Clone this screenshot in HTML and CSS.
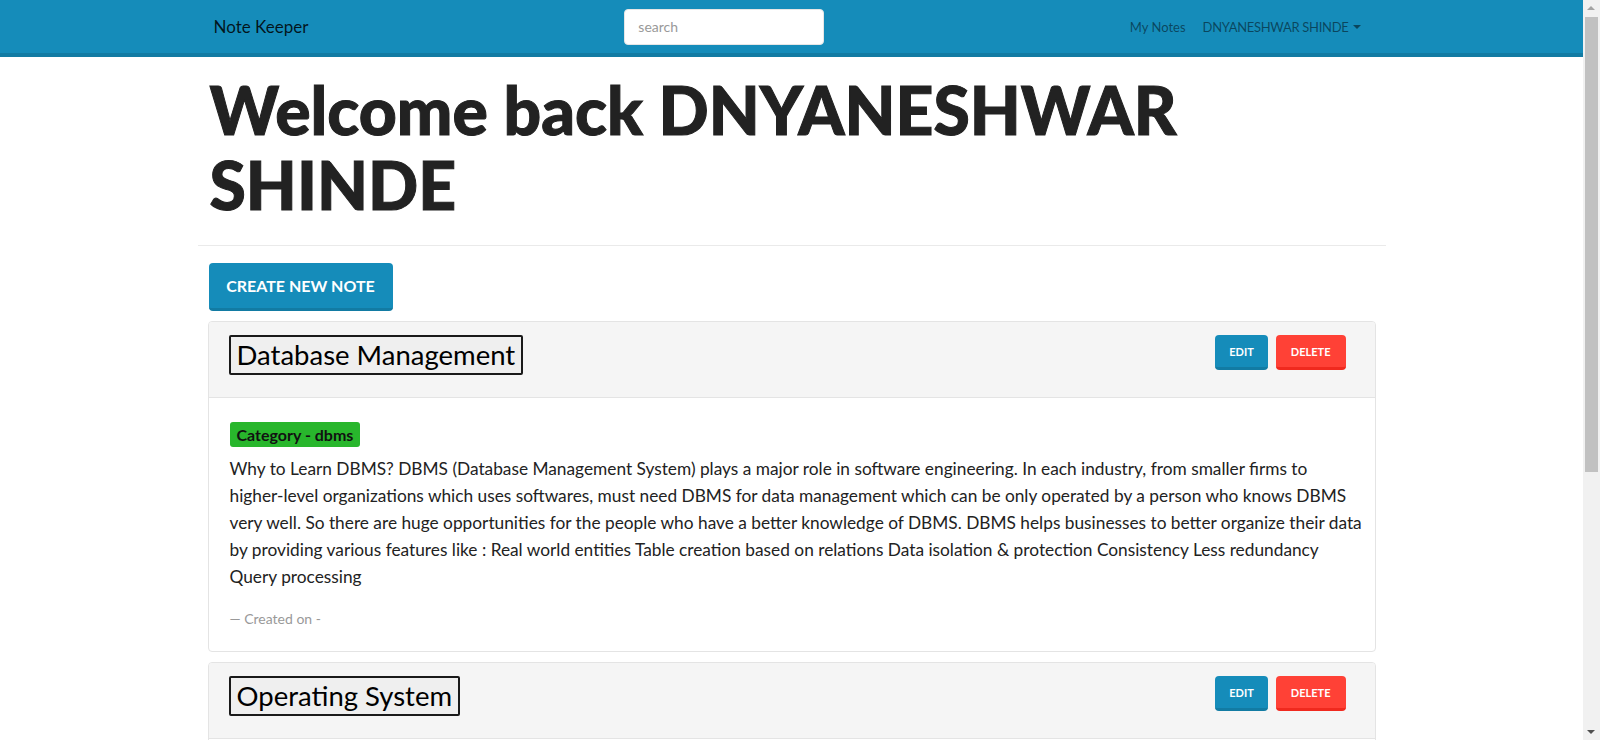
FILE: index.html
```html
<!DOCTYPE html>
<html lang="en">
<head>
<meta charset="utf-8">
<title>Note Keeper</title>
<link rel="stylesheet" href="styles.css">
</head>
<body>
<nav class="navbar">
  <div class="nav-inner">
    <a class="brand" href="#">Note Keeper</a>
    <form class="search-form"><input class="search" type="text" placeholder="search"></form>
    <ul class="nav-links">
      <li><a href="#">My Notes</a></li>
      <li><a href="#" class="dropdown user">DNYANESHWAR SHINDE</a></li>
    </ul>
  </div>
</nav>
<main class="mainback">
  <div class="page">
    <h1 class="heading">Welcome back DNYANESHWAR SHINDE</h1>
    <hr class="rule">
    <a href="#" class="btn btn-lg btn-primary create">Create New Note</a>

    <section class="card">
      <header class="card-header">
        <div class="title-wrap"><span class="note-title">Database Management</span></div>
        <div class="actions">
          <a href="#" class="btn btn-primary">Edit</a>
          <a href="#" class="btn btn-danger">Delete</a>
        </div>
      </header>
      <div class="card-body">
        <div class="badge-row"><span class="badge">Category - dbms</span></div>
        <blockquote class="quote">
          <p><span class="ln">Why to Learn DBMS? DBMS (Database Management System) plays a major role in software engineering. In each industry, from smaller firms to</span> <span class="ln">higher-level organizations which uses softwares, must need DBMS for data management which can be only operated by a person who knows DBMS</span> <span class="ln">very well. So there are huge opportunities for the people who have a better knowledge of DBMS. DBMS helps businesses to better organize their data</span> <span class="ln">by providing various features like : Real world entities Table creation based on relations Data isolation &amp; protection Consistency Less redundancy</span> <span class="ln">Query processing</span></p>
          <footer class="quote-footer">Created on -</footer>
        </blockquote>
      </div>
    </section>

    <section class="card">
      <header class="card-header">
        <div class="title-wrap"><span class="note-title">Operating System</span></div>
        <div class="actions">
          <a href="#" class="btn btn-primary">Edit</a>
          <a href="#" class="btn btn-danger">Delete</a>
        </div>
      </header>
      <div class="card-body">
        <div class="badge-row"><span class="badge">Category - os</span></div>
        <blockquote class="quote">
          <p>An Operating System (OS) is an interface between a computer user and computer hardware. An operating system is a software which performs all the basic tasks like file management, memory management, process management, handling input and output, and controlling peripheral devices such as disk drives and printers. Some popular Operating Systems include Linux Operating System, Windows Operating System, VMS, OS/400, AIX, z/OS, etc. Following are some of important functions of an operating System : Memory Management Processor Management Device Management File Management Security Control over system performance Job accounting Error detecting aids Coordination between other software and users.</p>
          <footer class="quote-footer">Created on -</footer>
        </blockquote>
      </div>
    </section>
  </div>
</main>
<div class="scrollbar" aria-hidden="true">
  <span class="sb-up"></span>
  <span class="sb-thumb"></span>
  <span class="sb-down"></span>
</div>
</body>
</html>
```
FILE: styles.css
```css
* { box-sizing: border-box; }
html, body { margin: 0; padding: 0; }
body {
  font-family: Lato, "Liberation Sans", sans-serif;
  color: #222;
  background: #fff;
  font-size: 14px;
  margin-right: 17px;
}
a { text-decoration: none; }

/* navbar */
.navbar {
  background: #158cba;
  border-bottom: 4px solid #127ba3;
  height: 57px;
}
.nav-inner {
  width: 1188px;
  margin: 0 auto;
  height: 100%;
  padding: 0 25px 0 16px;
  display: flex;
  align-items: center;
}
.brand {
  color: rgba(0, 0, 0, 0.85);
  font-size: 17px;
  line-height: 24px;
}
.search-form { margin: 0 0 0 316px; }
.search {
  width: 200px;
  height: 36px;
  border: 1px solid #e6e6e6;
  border-radius: 4px;
  padding: 0 13px;
  font-family: inherit;
  font-size: 14px;
  color: #555;
  background: #fff;
  display: block;
}
.search::placeholder { color: #999; }
.nav-links {
  list-style: none;
  margin: 0 0 0 auto;
  padding: 0;
  display: flex;
  gap: 17px;
}
.nav-links a {
  color: rgba(0, 0, 0, 0.5);
  font-size: 13px;
}
.nav-links .user { letter-spacing: -0.3px; }
.dropdown::after {
  content: "";
  display: inline-block;
  margin-left: 4px;
  vertical-align: 3px;
  border-top: 4px solid;
  border-left: 4px solid transparent;
  border-right: 4px solid transparent;
}

/* main */
.mainback { padding: 15px 0 10px; }
.page { width: 1188px; margin: 0 auto; }
.heading {
  font-size: 66px;
  line-height: 75px;
  font-weight: 900;
  -webkit-text-stroke: 1px #222;
  margin: 0;
  padding: 0 12px;
  color: #222;
}
.rule {
  border: 0;
  border-top: 1px solid #eaeaea;
  margin: 23px 0 17px;
}

.btn {
  display: inline-block;
  color: #fff;
  font-weight: 700;
  text-transform: uppercase;
  border-radius: 4px;
  border-style: solid;
  border-width: 0 0 3px 0;
  text-align: center;
}
.btn-primary { background: #158cba; border-color: #127ba3; }
.btn-danger { background: #ff4136; border-color: #f0291e; }
.create {
  margin-left: 11px;
  width: 184px;
  height: 48px;
  line-height: 45px;
  font-size: 16px;
}

/* cards */
.card {
  margin: 10px 10px;
  border: 1px solid #e4e4e4;
  border-radius: 4px;
  overflow: hidden;
}
.card-header {
  background: #f5f5f5;
  border-bottom: 1px solid #e4e4e4;
  display: flex;
  align-items: flex-start;
  padding: 13px 29px 22px 20px;
}
.title-wrap { flex: 1; }
.note-title {
  display: inline-block;
  background: #efefef;
  border: 2px solid #1a1a1a;
  border-radius: 2px;
  color: #000;
  font-size: 27.5px;
  line-height: 36px;
  padding: 0 6px;
}
.actions { display: flex; gap: 8px; }
.actions .btn {
  height: 35px;
  line-height: 33px;
  font-size: 11px;
  padding: 0 14px;
}
.actions .btn-danger { padding: 0 15px; }

.card-body { padding: 24px 4px 22px 21px; }
.badge-row { margin-bottom: 8px; }
.badge {
  display: inline-block;
  background: #28b62c;
  color: #111;
  font-weight: 700;
  font-size: 16px;
  line-height: 25px;
  padding: 0 7px;
  border-radius: 3px;
}
.quote { margin: 0; }
.quote p {
  margin: 0 0 18px;
  font-size: 17.3px;
  line-height: 27px;
  color: #222;
}
.ln { white-space: nowrap; }
.quote-footer {
  font-size: 14px;
  line-height: 21px;
  color: #999;
}
.quote-footer::before { content: "\2014\00A0"; }

/* imitation of the browser's classic scrollbar */
.scrollbar {
  position: fixed;
  top: 0;
  right: 0;
  width: 17px;
  height: 100vh;
  background: #f1f1f1;
}
.sb-thumb {
  position: absolute;
  left: 2px;
  right: 2px;
  top: 17px;
  height: 455px;
  background: #c1c1c1;
}
.sb-up, .sb-down {
  position: absolute;
  left: 4px;
  width: 0;
  height: 0;
  border-left: 4px solid transparent;
  border-right: 4px solid transparent;
}
.sb-up { top: 6px; border-bottom: 4px solid #a3a3a3; }
.sb-down { bottom: 6px; border-top: 4px solid #505050; }
```
